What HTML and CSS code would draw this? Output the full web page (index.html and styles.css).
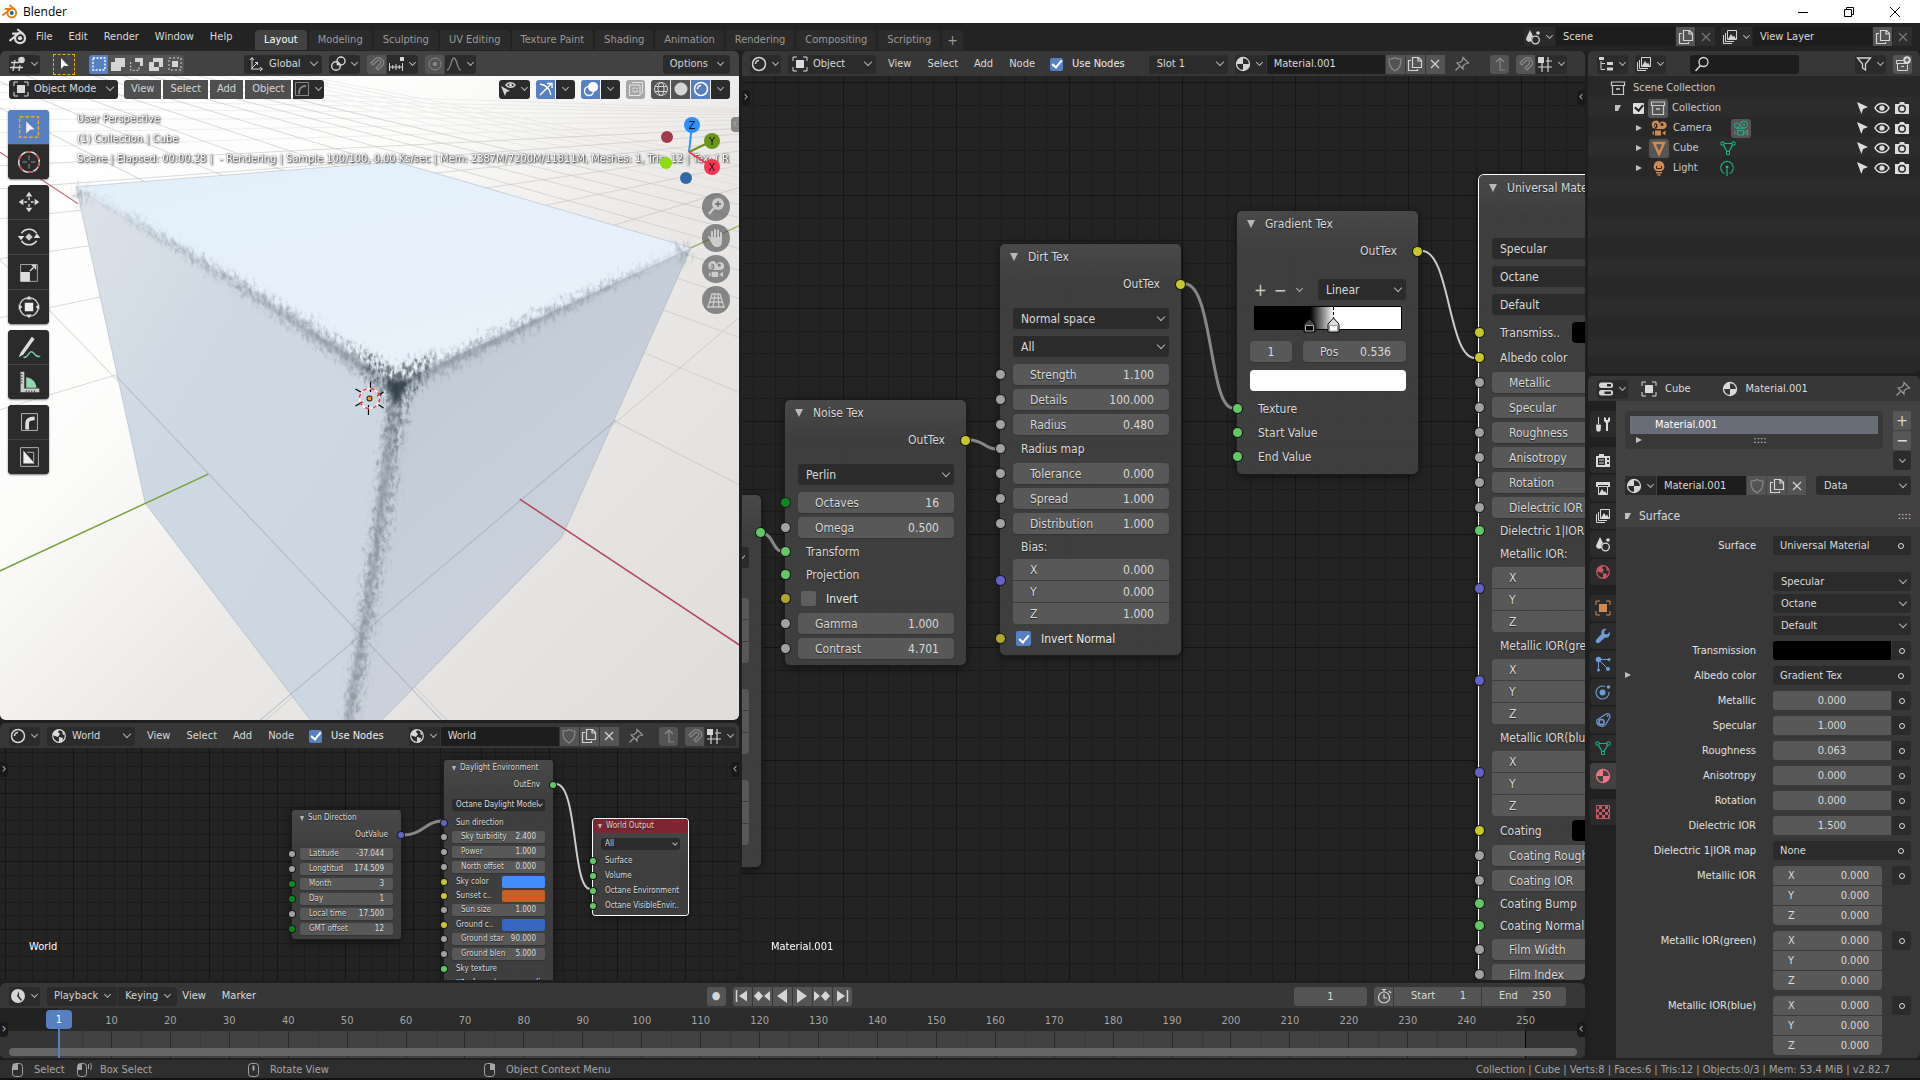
FILE: index.html
```html
<!DOCTYPE html>
<html lang="en">
<head>
    <meta charset="UTF-8">
    <meta name="viewport" content="width=device-width, initial-scale=1.0">
    <title>Blender</title>
    <link rel="stylesheet" href="styles.css">
</head>
<body>

<!-- icon set -->
<svg class="defs" aria-hidden="true">
    <symbol id="i-logo" viewBox="0 0 16 16"><path d="M1 11 8.500 5H3.500M8 1.500l4 3.200" fill="none" stroke="currentColor" stroke-width="1.800" stroke-linecap="round"/><circle cx="9.800" cy="9" r="4.400" fill="none" stroke="currentColor" stroke-width="2"/><circle cx="9.800" cy="9" r="1.900" fill="var(--core, currentColor)"/></symbol>
    <symbol id="i-view3d" viewBox="0 0 16 16"><path d="M1 6.500h8M0 11.500h13M5 4 3 15M10 9l-1 6" fill="none" stroke="currentColor" stroke-width="1.300"/><circle cx="11.500" cy="4" r="3.300" fill="currentColor"/></symbol>
    <symbol id="i-arrow" viewBox="0 0 16 16"><path d="M5 2v11l3-3.200 4.500.200z" fill="currentColor"/></symbol>
    <symbol id="i-arrow2" viewBox="0 0 16 16"><path d="M3 2l4.300 12 1.900-5L14 7z" fill="currentColor"/></symbol>
    <symbol id="i-selnew" viewBox="0 0 16 16"><path d="M2 2h12v12H2z" fill="none" stroke="currentColor" stroke-width="1.400" stroke-dasharray="2 1.500"/></symbol>
    <symbol id="i-selext" viewBox="0 0 16 16"><path d="M5 2h10v9h-4v4H1V6h4z" fill="currentColor"/></symbol>
    <symbol id="i-selsub" viewBox="0 0 16 16"><path d="M6 2h8v8h-3V6H6z" fill="currentColor"/><path d="M1.700 6v8.300H10V11" fill="none" stroke="currentColor" stroke-dasharray="2 1.500"/></symbol>
    <symbol id="i-seldif" viewBox="0 0 16 16"><path fill-rule="evenodd" d="M5 2h10v9h-4v4H1V6h4zm1 4v5h5V6z" fill="currentColor"/></symbol>
    <symbol id="i-selint" viewBox="0 0 16 16"><path d="M2 2h12v12H2z" fill="none" stroke="currentColor" stroke-dasharray="2 2"/><path d="M5 5h6v6H5z" fill="currentColor"/></symbol>
    <symbol id="i-axes" viewBox="0 0 16 16"><path d="M4 13V2M2 4l2-2.500L6 4M3 13h11M12 11l2.500 2-2.500 2M4 12l5-5M7 6.500h2.500V9" fill="none" stroke="currentColor"/></symbol>
    <symbol id="i-pivot" viewBox="0 0 16 16"><circle cx="6" cy="10" r="4.300" fill="none" stroke="currentColor" stroke-width="1.400"/><circle cx="11" cy="5" r="4" fill="none" stroke="currentColor" stroke-width="1.400"/><circle cx="8" cy="8" r="1.500" fill="currentColor"/></symbol>
    <symbol id="i-magnet" viewBox="0 0 16 16"><path d="M2 7 6 3c6-4 11 3 7 7l-4 4-2-2 4-4c2-3-1-5-3-3L4 9z" fill="none" stroke="currentColor" stroke-width="1.200"/></symbol>
    <symbol id="i-snapinc" viewBox="0 0 16 16"><path d="M1.500 7v8M14.500 7v8M1.500 11h13M4.700 9v4M8 8v6M11.300 9v4" fill="none" stroke="currentColor"/><path d="M12 1h4v4h-4z" fill="currentColor"/></symbol>
    <symbol id="i-snapgrid" viewBox="0 0 16 16"><path d="M5 7v9M11 1v15M1 11h14M9 5h6" fill="none" stroke="currentColor" stroke-width="1.200"/><path d="M1 1h6v6H1z" fill="currentColor"/></symbol>
    <symbol id="i-prop" viewBox="0 0 16 16"><circle cx="8" cy="8" r="6" fill="none" stroke="currentColor"/><circle cx="8" cy="8" r="2.200" fill="currentColor"/></symbol>
    <symbol id="i-falloff" viewBox="0 0 16 16"><path d="M1 14c4 0 4-12 7-12s3 12 7 12" fill="none" stroke="currentColor" stroke-width="1.300"/></symbol>
    <symbol id="i-object" viewBox="0 0 16 16"><path d="M1 5V1h4M11 1h4v4M15 11v4h-4M5 15H1v-4" fill="none" stroke="currentColor"/><path d="M4 4h8v8H4z" fill="currentColor"/></symbol>
    <symbol id="i-curvebox" viewBox="0 0 16 16"><path d="M1.500 1.500h13v13h-13z" fill="none" stroke="currentColor"/><path d="M5 13c0-6 2-8 7-8" fill="none" stroke="currentColor" stroke-width="2"/></symbol>
    <symbol id="i-visib" viewBox="0 0 16 16"><path d="M6 4c2-3 7-3 9 0-2 3-7 3-9 0z" fill="none" stroke="currentColor" stroke-width="1.500"/><circle cx="10.500" cy="4" r="1.500" fill="currentColor"/><path d="M1 5l4 10 1.500-4L10 10z" fill="currentColor"/></symbol>
    <symbol id="i-gizmo" viewBox="0 0 16 16"><path d="M2 3c6 1 10 5 11 11M2 14 13 3M9 2.500h5V7" fill="none" stroke="currentColor" stroke-width="1.400"/></symbol>
    <symbol id="i-overlay" viewBox="0 0 16 16"><circle cx="10" cy="6" r="5" fill="currentColor"/><circle cx="6" cy="10" r="4.500" fill="none" stroke="currentColor" stroke-width="1.400"/></symbol>
    <symbol id="i-xray" viewBox="0 0 16 16"><path d="M4 1.500h10.500V12H12M1.500 4H12v10.500H1.500z" fill="none" stroke="currentColor"/><path d="M5 7h4v4H5z" fill="none" stroke="currentColor" stroke-dasharray="2 1"/></symbol>
    <symbol id="i-wire" viewBox="0 0 16 16"><circle cx="8" cy="8" r="6.500" fill="none" stroke="currentColor"/><ellipse cx="8" cy="8" rx="3" ry="6.500" fill="none" stroke="currentColor"/><path d="M2 5.500h12M2 10.500h12" stroke="currentColor"/></symbol>
    <symbol id="i-solid" viewBox="0 0 16 16"><circle cx="8" cy="8" r="6.500" fill="currentColor"/></symbol>
    <symbol id="i-shader" viewBox="0 0 16 16"><circle cx="8" cy="8" r="6.500" fill="none" stroke="currentColor" stroke-width="1.500"/><path d="M4.500 8c0-2 1.500-3.500 3.500-3.500" fill="none" stroke="currentColor" stroke-width="1.600"/></symbol>
    <symbol id="i-material" viewBox="0 0 16 16"><circle cx="8" cy="8" r="6.500" fill="none" stroke="currentColor" stroke-width="1.300"/><path d="M8 1.500V8H1.500A6.500 6.500 0 0 1 8 1.500zM8 8h6.500A6.500 6.500 0 0 1 8 14.500z" fill="currentColor"/></symbol>
    <symbol id="i-world" viewBox="0 0 16 16"><circle cx="8" cy="8" r="6.300" fill="none" stroke="currentColor" stroke-width="1.200"/><path d="M2 5c2-3 5-3.500 6-3l-1 2 2 2-2 3-3-1-2.500-1zM8 9l4 1-1 4-3 .5z M11 3l3 3-2 1z" fill="currentColor"/></symbol>
    <symbol id="i-shield" viewBox="0 0 16 16"><path d="M8 1.500C6 3 4 3 2 3c0 6 1 9 6 12 5-3 6-6 6-12-2 0-4 0-6-1.500z" fill="none" stroke="currentColor" stroke-width="1.200"/></symbol>
    <symbol id="i-dup" viewBox="0 0 16 16"><path d="M5.500 1.500h6l3 3v7h-9z M11 1.500V5h3.500" fill="none" stroke="currentColor" stroke-width="1.200"/><path d="M4 4.500H1.500v10h9V13" fill="none" stroke="currentColor" stroke-width="1.200"/></symbol>
    <symbol id="i-x" viewBox="0 0 16 16"><path d="m4 4 8 8M12 4l-8 8" stroke="currentColor" stroke-width="1.200"/></symbol>
    <symbol id="i-pin" viewBox="0 0 16 16"><path d="m9 1.500 5.500 5.500-1.500.500-2 .500-2 2v3L3 7l3-.500 2.500-2zM5.500 10.500 1.500 14.500" fill="none" stroke="currentColor" stroke-width="1.200"/></symbol>
    <symbol id="i-up" viewBox="0 0 16 16"><path d="M8 14V2M4 6l4-4 4 4M8 14h5" fill="none" stroke="currentColor" stroke-width="1.200"/></symbol>
    <symbol id="i-scene" viewBox="0 0 16 16"><path d="M5 1 1.500 8.500C0 12 4 14 6.500 12c-1-2 0-4 1.500-5z" fill="currentColor"/><circle cx="10.500" cy="11" r="3.800" fill="none" stroke="currentColor" stroke-width="1.300"/><circle cx="13" cy="4" r="1.800" fill="currentColor"/></symbol>
    <symbol id="i-layers" viewBox="0 0 16 16"><path d="M5.500 1.500h9v9h-9zM3.500 4v8.500H12M1.500 6v8.500H10" fill="none" stroke="currentColor"/><path d="m6 10 3-5 2 3 1-1.500 2 3.500z" fill="currentColor"/></symbol>
    <symbol id="i-tree" viewBox="0 0 16 16"><path d="M1 1h5v3H1zM9 6h6v3H9zM9 11.500h6v3H9z" fill="currentColor"/><path d="M3 5v8.500h4M3 7.500h4" fill="none" stroke="currentColor"/></symbol>
    <symbol id="i-search" viewBox="0 0 16 16"><circle cx="9.500" cy="6" r="4.500" fill="none" stroke="currentColor" stroke-width="1.300"/><path d="M6.500 9.500 1.500 15" stroke="currentColor" stroke-width="1.500"/></symbol>
    <symbol id="i-filter" viewBox="0 0 16 16"><path d="M1.500 2h13L9.500 8v6l-3-2V8z" fill="none" stroke="currentColor" stroke-width="1.300"/></symbol>
    <symbol id="i-newcol" viewBox="0 0 16 16"><path d="M1.500 4.500H8M1.500 4.500v3h12M2.500 7.500v7h10v-6M6 10.500h3" fill="none" stroke="currentColor"/><circle cx="12" cy="4" r="3.800" fill="currentColor"/><path d="M12 2v4M10 4h4" stroke="#444"/></symbol>
    <symbol id="i-archive" viewBox="0 0 16 16"><path d="M1.500 2h13v3.500h-13zM2.500 5.500h11v9h-11z" fill="none" stroke="currentColor" stroke-width="1.200"/><path d="M6 9h4" stroke="currentColor" stroke-width="1.600"/></symbol>
    <symbol id="i-camera" viewBox="0 0 16 16"><path fill-rule="evenodd" d="M3.500 3a3 3 0 1 1 0 6h9a3.800 3.800 0 1 0-4-5.500A3 3 0 0 0 1 5.500 3 3 0 0 0 4 8.500zM4 4.500a1.200 1.200 0 1 1 0 2.400 1.200 1.200 0 0 1 0-2.400zM11 3a1.500 1.500 0 1 1 0 3 1.500 1.500 0 0 1 0-3z" fill="currentColor"/><path d="M4 10.500h6v5H4zM11 13l3.500-2.500v5zM3 11.500v3H1.500v-3z" fill="currentColor"/></symbol>
    <symbol id="i-camline" viewBox="0 0 16 16"><circle cx="4" cy="5.500" r="2.500" fill="none" stroke="currentColor"/><circle cx="11" cy="4.500" r="3.500" fill="none" stroke="currentColor"/><circle cx="11" cy="4.500" r="1" fill="currentColor"/><path d="M3 8.300h9M4.500 10.500h6v4.500h-6zM11 12.500l3.500-2v4.500zM2 11v3" fill="none" stroke="currentColor"/></symbol>
    <symbol id="i-cone" viewBox="0 0 16 16"><path d="M3 3h10L8 14z" fill="none" stroke="currentColor" stroke-width="2.500"/></symbol>
    <symbol id="i-mesh" viewBox="0 0 16 16"><path d="M2.500 3.500h11L8 13z" fill="none" stroke="currentColor" stroke-width="1.200"/><path d="M1 2h3v3H1zM12 2h3v3h-3zM6.500 11.500h3v3h-3z" fill="#282828" stroke="currentColor"/></symbol>
    <symbol id="i-bulb" viewBox="0 0 16 16"><path d="M8 1a5.500 5.500 0 0 0-3 10h6A5.500 5.500 0 0 0 8 1z" fill="currentColor"/><path d="M5.500 6v2.500h5V6" fill="none" stroke="#282828"/><path d="M5 12.700h6M6.500 15h3" stroke="currentColor" stroke-width="1.500"/></symbol>
    <symbol id="i-lightdata" viewBox="0 0 16 16"><path d="M5.500 13.500a6.300 6.300 0 1 1 5 0M8 9v7" fill="none" stroke="currentColor" stroke-width="1.200"/><circle cx="8" cy="7" r="1.500" fill="currentColor"/></symbol>
    <symbol id="i-eye" viewBox="0 0 16 16"><path d="M1 8c3-6 11-6 14 0-3 6-11 6-14 0z" fill="none" stroke="currentColor" stroke-width="1.600"/><circle cx="8" cy="8" r="2.600" fill="currentColor"/></symbol>
    <symbol id="i-photo" viewBox="0 0 16 16"><path fill-rule="evenodd" d="M1 4h4l1-2h4l1 2h4v10H1zm7 .8a4 4 0 1 0 0 8 4 4 0 0 0 0-8z" fill="currentColor"/><circle cx="8" cy="8.800" r="2.500" fill="currentColor"/></symbol>
    <symbol id="i-props" viewBox="0 0 16 16"><rect x="1" y="1.500" width="14" height="5.500" rx="2.500" fill="currentColor"/><rect x="1" y="9" width="14" height="5.500" rx="2.500" fill="currentColor"/><path d="M9 3h4v2.500H9zM6.500 10.500H13V13H6.500z" fill="#2b2b2b"/></symbol>
    <symbol id="i-tool" viewBox="0 0 16 16"><path d="M3.500 1v7M1.500 9h4l-.5 6h-3z" fill="currentColor" stroke="currentColor"/><path d="M9 1v4l2 2v8h2V7l2-2V1l-2 1v2h-2V2z" fill="currentColor"/></symbol>
    <symbol id="i-render" viewBox="0 0 16 16"><path fill-rule="evenodd" d="M4 2h5v2h6v11H1V4h3zM3 6v7h7V6zm9 0v2h2V6zm0 4v2h2v-2z" fill="currentColor"/><path d="M4 8h5M4 11h5" stroke="currentColor"/></symbol>
    <symbol id="i-output" viewBox="0 0 16 16"><path d="M1 2h14v5h-2V5H3v2H1z" fill="currentColor"/><path d="M3.500 6.500h9v8h-9z" fill="none" stroke="currentColor"/><path d="m4 14 3-5 2 3 1-1 2 3z" fill="currentColor"/></symbol>
    <symbol id="i-wrench" viewBox="0 0 16 16"><path d="M14.500 4 12 6.500 9.500 6 9 3.500 11.500 1C8 0 5.500 3 6.500 6L1 12c-1 2 1 4 3 3l6-5.500c3 1 6-2 4.500-5.500z" fill="currentColor"/></symbol>
    <symbol id="i-particles" viewBox="0 0 16 16"><circle cx="3.500" cy="3.500" r="2.800" fill="currentColor"/><path d="M3.500 3.500H14M3.500 3.500V14M3.500 3.500 13 13" stroke="currentColor"/><circle cx="14" cy="3.500" r="1.500" fill="currentColor"/><circle cx="3.500" cy="14" r="1.500" fill="currentColor"/><circle cx="13" cy="13" r="2" fill="currentColor"/></symbol>
    <symbol id="i-physics" viewBox="0 0 16 16"><circle cx="7.500" cy="8.500" r="3" fill="currentColor"/><path d="M10 2.500A6.500 6.500 0 1 0 14 8" fill="none" stroke="currentColor" stroke-width="1.200"/><circle cx="13.500" cy="3" r="1.800" fill="currentColor"/></symbol>
    <symbol id="i-constraint" viewBox="0 0 16 16"><path d="M2 8 11 2c3-1.500 5 1.500 3.500 4L11 12a5 5 0 0 1-9-4z" fill="none" stroke="currentColor" stroke-width="1.200"/><circle cx="6.500" cy="10" r="2.600" fill="none" stroke="currentColor" stroke-width="1.500"/><circle cx="12.700" cy="4" r="1" fill="currentColor"/></symbol>
    <symbol id="i-checker" viewBox="0 0 16 16"><path d="M1.500 1.500h13v13h-13z" fill="none" stroke="currentColor"/><path d="M4 2h3v3H4zM10 2h3v3h-3zM1 5h3v3H1zM7 5h3v3H7zM13 5h2v3h-2zM4 8h3v3H4zM10 8h3v3h-3zM1 11h3v3H1zM7 11h3v3H7zM13 11h2v3h-2z" fill="currentColor"/></symbol>
    <symbol id="i-clock" viewBox="0 0 16 16"><path fill-rule="evenodd" d="M8 1a7 7 0 1 1 0 14A7 7 0 0 1 8 1zm1 2L7 8l4 5 1-1-3-4z" fill="currentColor"/></symbol>
    <symbol id="i-watch" viewBox="0 0 16 16"><circle cx="8" cy="9.500" r="5.500" fill="none" stroke="currentColor" stroke-width="1.200"/><path d="M8 6v4h3M6 1.500h4M8 2v2M13 3l2 2" fill="none" stroke="currentColor" stroke-width="1.200"/></symbol>
    <symbol id="i-start" viewBox="0 0 16 16"><path d="M2.500 2v12" stroke="currentColor" stroke-width="1.500"/><path d="M13 2.500v11L5 8z" fill="currentColor"/></symbol>
    <symbol id="i-end" viewBox="0 0 16 16"><path d="M13.500 2v12" stroke="currentColor" stroke-width="1.500"/><path d="M3 2.500v11L11 8z" fill="currentColor"/></symbol>
    <symbol id="i-prevkey" viewBox="0 0 16 16"><path d="M0 8l4.500-5L9 8l-4.500 5zM16 3v10l-6-5z" fill="currentColor"/></symbol>
    <symbol id="i-nextkey" viewBox="0 0 16 16"><path d="M7 8l4.500-5L16 8l-4.500 5zM0 3v10l6-5z" fill="currentColor"/></symbol>
    <symbol id="i-back" viewBox="0 0 16 16"><path d="M13 1v14L3 8z" fill="currentColor"/></symbol>
    <symbol id="i-play" viewBox="0 0 16 16"><path d="M3 1v14l10-7z" fill="currentColor"/></symbol>
    <symbol id="i-lmb" viewBox="0 0 16 16"><rect x="2.500" y="1.500" width="10" height="13" rx="3" fill="none" stroke="currentColor"/><path d="M3 2h5v6H3z" fill="currentColor"/></symbol>
    <symbol id="i-mmb" viewBox="0 0 16 16"><rect x="2.500" y="1.500" width="10" height="13" rx="3" fill="none" stroke="currentColor"/><path d="M6.500 3.500h2v5h-2z" fill="currentColor"/></symbol>
    <symbol id="i-rmb" viewBox="0 0 16 16"><rect x="2.500" y="1.500" width="10" height="13" rx="3" fill="none" stroke="currentColor"/><path d="M8 2h5v6H8z" fill="currentColor"/></symbol>
    <symbol id="i-drag" viewBox="0 0 16 16"><rect x="1.500" y="1.500" width="9" height="13" rx="3" fill="none" stroke="currentColor"/><path d="M2 2h4v6H2z" fill="currentColor"/><path d="M12.500 2v5M14.500 1c1 2 1 5 0 7" fill="none" stroke="currentColor"/></symbol>
</svg>

<div class="titlebar">
    <svg class="ic app"><use href="#i-logo"/></svg><span>Blender</span>
    <div class="winbtns">
        <button aria-label="Minimize"><svg viewBox="0 0 12 12"><path d="M1 6.500h10" stroke="#000"/></svg></button>
        <button aria-label="Restore"><svg viewBox="0 0 12 12"><path d="M1.500 3.500h7v7h-7zM3.500 3V1.500h7v7H9" fill="none" stroke="#000"/></svg></button>
        <button aria-label="Close"><svg viewBox="0 0 12 12"><path d="m1 1 10 10M11 1 1 11" stroke="#000"/></svg></button>
    </div>
</div>

<header class="topbar">
    <svg class="ic logo"><use href="#i-logo"/></svg>
    <nav class="menus"><button>File</button><button>Edit</button><button>Render</button><button>Window</button><button>Help</button></nav>
    <nav class="tabs">
        <button class="on">Layout</button><button>Modeling</button><button>Sculpting</button><button>UV Editing</button><button>Texture Paint</button><button>Shading</button><button>Animation</button><button>Rendering</button><button>Compositing</button><button>Scripting</button><button class="addtab" aria-label="Add workspace">+</button>
    </nav>
    <div class="idblock push">
        <button class="btn wide" aria-label="Browse scene"><svg class="ic"><use href="#i-scene"/></svg><i class="chev"></i></button>
        <input class="name long" aria-label="Scene" value="Scene">
        <button class="btn lite" aria-label="New scene"><svg class="ic"><use href="#i-dup"/></svg></button>
        <button class="btn dim" aria-label="Delete scene"><svg class="ic"><use href="#i-x"/></svg></button>
    </div>
    <div class="idblock">
        <button class="btn wide" aria-label="Browse view layer"><svg class="ic"><use href="#i-layers"/></svg><i class="chev"></i></button>
        <input class="name long" aria-label="View Layer" value="View Layer">
        <button class="btn lite" aria-label="New view layer"><svg class="ic"><use href="#i-dup"/></svg></button>
        <button class="btn dim" aria-label="Delete view layer"><svg class="ic"><use href="#i-x"/></svg></button>
    </div>
</header>

<main class="workspace">

    <!-- 3D viewport -->
    <section class="area view3d">
        <div class="bar">
            <button class="btn wide" aria-label="Editor type"><svg class="ic"><use href="#i-view3d"/></svg><i class="chev"></i></button>
            <button class="tweak" aria-label="Tweak"><svg class="ic"><use href="#i-arrow"/></svg></button>
            <div class="group modes">
                <button class="btn blue" aria-label="Set"><svg class="ic"><use href="#i-selnew"/></svg></button><button class="btn lite" aria-label="Extend"><svg class="ic"><use href="#i-selext"/></svg></button><button class="btn lite" aria-label="Subtract"><svg class="ic"><use href="#i-selsub"/></svg></button><button class="btn lite" aria-label="Difference"><svg class="ic"><use href="#i-seldif"/></svg></button><button class="btn lite" aria-label="Intersect"><svg class="ic"><use href="#i-selint"/></svg></button>
            </div>
            <div class="pick icon orient"><svg class="ic"><use href="#i-axes"/></svg><select aria-label="Orientation"><option>Global</option></select></div>
            <button class="btn wide" aria-label="Pivot"><svg class="ic"><use href="#i-pivot"/></svg><i class="chev"></i></button>
            <div class="group">
                <button class="btn lite faint" aria-label="Snap"><svg class="ic"><use href="#i-magnet"/></svg></button><button class="btn wide" aria-label="Snap to"><svg class="ic"><use href="#i-snapinc"/></svg><i class="chev"></i></button>
            </div>
            <div class="group">
                <button class="btn lite faint" aria-label="Proportional editing"><svg class="ic"><use href="#i-prop"/></svg></button><button class="btn wide faint" aria-label="Falloff"><svg class="ic"><use href="#i-falloff"/></svg><i class="chev"></i></button>
            </div>
            <button class="btn text push">Options<i class="chev"></i></button>
        </div>
        <div class="viewport">
            <svg class="render" viewBox="1 76 738 644" preserveAspectRatio="xMidYMid slice" role="img" aria-label="Rendered cube">
                <defs>
                    <linearGradient id="bg" x1="0" y1="0.100" x2="1" y2="1"><stop offset="0" stop-color="#fff"/><stop offset=".3" stop-color="#fcfcfb"/><stop offset=".55" stop-color="#ebe9e7"/><stop offset="1" stop-color="#dedddc"/></linearGradient>
                    <linearGradient id="ftop" x1="0" y1="0" x2="0.600" y2="1"><stop offset="0" stop-color="#e2f0fb"/><stop offset="1" stop-color="#eaf1fa"/></linearGradient>
                    <linearGradient id="fleft" x1="0" y1="0" x2="0.700" y2="0.700"><stop offset="0" stop-color="#dde2e9"/><stop offset=".5" stop-color="#cfd9e3"/><stop offset="1" stop-color="#cdd7e2"/></linearGradient>
                    <linearGradient id="fright" x1="0" y1="0" x2="0.600" y2="1"><stop offset="0" stop-color="#bcc9d4"/><stop offset="1" stop-color="#cfd4de"/></linearGradient>
                    <!-- blurred edge strips broken up by a grainy mask -->
                    <filter id="dirt" filterUnits="userSpaceOnUse" x="40" y="150" width="680" height="580">
                        <feGaussianBlur in="SourceGraphic" stdDeviation="3" result="b"/>
                        <feTurbulence type="fractalNoise" baseFrequency=".26 .15" numOctaves="3" seed="4" result="n"/>
                        <feDisplacementMap in="b" in2="n" scale="20" xChannelSelector="R" yChannelSelector="G" result="d"/>
                        <feColorMatrix in="n" values="0 0 0 0 0 0 0 0 0 0 0 0 0 0 0 0 0 3 0 -1" result="m"/>
                        <feComposite in="d" in2="m" operator="in"/>
                        <feGaussianBlur stdDeviation=".6"/>
                    </filter>
                    <filter id="soft" filterUnits="userSpaceOnUse" x="40" y="150" width="680" height="580"><feGaussianBlur stdDeviation="2"/></filter>
                </defs>
                <path d="M0 70h740v655H0z" fill="url(#bg)"/>
                <g stroke="#c4c3c2" stroke-opacity=".6" fill="none">
                    <path d="M-290-40 740 1021M-290-40 740 485M-290-40 740 393M-290-40 740 338M-290-40 740 299M-290-40 740 271M-290-40 740 249M-290-40 740 232M-290-40 740 218M-290-40 740 205"/>
                    <path d="M975 117 0 946M975 117 0 410M975 117 0 318M975 117 0 259M975 117 0 219M975 117 0 189M975 117 0 166"/>
                    <path stroke-opacity=".25" d="M-290-40 740 195M-290-40 740 186M-290-40 740 178M-290-40 740 172M-290-40 740 166M-290-40 740 161M975 117 0 148M975 117 0 133M975 117 0 120M975 117 0 109M975 117 0 100M975 117 0 93M975 117 0 85"/>
                </g>
                <path d="M0 152 79 204" stroke="#c87080" stroke-width="1.300"/><path d="M691 248 739 226" stroke="#93b25c" stroke-width="1.300"/>
                <path d="M77 187 397 162 691 248 396 384z" fill="url(#ftop)"/>
                <path d="M77 187 396 384 347 722H313L146 503z" fill="url(#fleft)"/>
                <path d="M691 248 562 537 380 722H347L396 384z" fill="url(#fright)"/>
                <path filter="url(#soft)" fill="#8d98a3" opacity=".6" d="M77 186 250 289 390 378 406 378 560 308 691 247 560 312 402 390 378 560 352 722H345L372 560 390 392 250 294z"/>
                <g filter="url(#dirt)" fill="#848d95">
                    <path d="M76 184 250 284 396 370 410 370 560 301 691 245 560 315 404 396H388L250 298z" opacity=".55"/>
                    <path d="M350 346 396 368 438 352 410 402 398 450H391L386 402z" opacity=".8" fill="#59626a"/>
                    <path d="M389 390h16l-8 100-40 232H344l32-222z" opacity=".7" fill="#848b94"/>
                    <path d="M76 184l16 5-12 22zM692 246l-20-4 11 26z" opacity=".5"/>
                </g>
                <path filter="url(#soft)" d="M387 380h22l-8 18-5 8-4-8z" fill="#2b3740" opacity=".85"/>
                <path d="M77 187 397 162 691 248M691 248 562 537 380 722M77 187 146 503 313 722" fill="none" stroke="#9aa4ae" stroke-opacity=".4" stroke-width="1"/>
                <path d="M117 376 442 720M616 420 258 722" stroke="#9a9fa5" stroke-opacity=".55" fill="none"/>
                <path d="M0 571 209 474" stroke="#7ba13a" stroke-width="1.600"/><path d="M520 499 740 645" stroke="#b5485c" stroke-width="1.600"/>
                <path d="M371 382v10M369 405v10M356 389l7 4M384 392l-6 4M356 406l7-4M384 408l-6-4" stroke="#000" stroke-width="1.200"/>
                <circle cx="370" cy="398.500" r="10" fill="none" stroke="#fff" stroke-width="1.500"/><circle cx="370" cy="398.500" r="10" fill="none" stroke="#e33" stroke-width="1.500" stroke-dasharray="4 4"/><circle cx="370" cy="398.500" r="2.500" fill="#f90" stroke="#222"/>
            </svg>
            <div class="bar over">
                <div class="pick icon mode"><svg class="ic"><use href="#i-object"/></svg><select aria-label="Mode"><option>Object Mode</option></select></div>
                <div class="group vmenus">
                    <button class="btn flat">View</button><button class="btn flat">Select</button><button class="btn flat">Add</button><button class="btn flat">Object</button><button class="btn wide faint" aria-label="Curve"><svg class="ic"><use href="#i-curvebox"/></svg><i class="chev"></i></button>
                </div>
                <button class="btn wide push" aria-label="Visibility"><svg class="ic"><use href="#i-visib"/></svg><i class="chev"></i></button>
                <div class="group"><button class="btn blue" aria-label="Gizmos"><svg class="ic"><use href="#i-gizmo"/></svg></button><button class="btn" aria-label="Gizmo options"><i class="chev"></i></button></div>
                <div class="group"><button class="btn blue" aria-label="Overlays"><svg class="ic"><use href="#i-overlay"/></svg></button><button class="btn" aria-label="Overlay options"><i class="chev"></i></button></div>
                <button class="btn xray" aria-label="X-ray"><svg class="ic"><use href="#i-xray"/></svg></button>
                <div class="group shading"><button class="btn lite" aria-label="Wireframe"><svg class="ic"><use href="#i-wire"/></svg></button><button class="btn lite" aria-label="Solid"><svg class="ic"><use href="#i-solid"/></svg></button><button class="btn blue" aria-label="Rendered"><svg class="ic"><use href="#i-shader"/></svg></button><button class="btn" aria-label="Shading options"><i class="chev"></i></button></div>
            </div>
            <div class="stats"><p>User Perspective</p><p>(1) Collection | Cube</p><p>Scene | Elapsed: 00:00.28 | &nbsp;- Rendering | Sample 100/100, 0.00 Ks/sec | Mem: 2387M/7200M/11811M, Meshes: 1, Tris: 12 | Tex: ( R</p></div>
            <div class="toolbar">
                <div>
                    <button class="blue" aria-label="Select box"><svg viewBox="0 0 32 32"><path d="M6 5h20v22H6z" fill="none" stroke="#f5a623" stroke-width="1.600" stroke-dasharray="4 2"/><path d="M13 10v13l4-4 5-.500z" fill="#eee"/></svg></button>
                    <button aria-label="Cursor"><svg viewBox="0 0 32 32"><circle cx="16" cy="16" r="11" fill="none" stroke="#ddd" stroke-width="1.500"/><circle cx="16" cy="16" r="11" fill="none" stroke="#c44" stroke-width="1.500" stroke-dasharray="6 6"/><path d="M16 9v5M16 18v5M9 16h5M18 16h5" stroke="#999"/></svg></button>
                </div>
                <div>
                    <button aria-label="Move"><svg viewBox="0 0 32 32"><path d="m16 5 3.500 5h-7zM16 27l3.500-5h-7zM5 16l5-3.500v7zM27 16l-5-3.500v7z" fill="#ddd"/><path d="M16 11v3M16 18v3M11 16h3M18 16h3" stroke="#ddd" stroke-width="1.500"/></svg></button>
                    <button aria-label="Rotate"><svg viewBox="0 0 32 32"><path d="M8 12a9.500 9.500 0 0 1 16 0M24 20a9.500 9.500 0 0 1-16 0" fill="none" stroke="#ddd" stroke-width="1.600"/><path d="M4 15h7l-3.500 4.500zM21 17h7l-3.500-5z" fill="#ddd"/><path d="m16 12 4 4-4 4-4-4z" fill="#ccc"/></svg></button>
                    <button aria-label="Scale"><svg viewBox="0 0 32 32"><path d="M7 8h18v18H7z" fill="none" stroke="#aaa"/><path d="M7 16h10v10H7z" fill="#ddd"/><path d="m17 15 6-6M23 13V9h-4" stroke="#ddd" stroke-width="1.500" fill="none"/></svg></button>
                    <button aria-label="Transform"><svg viewBox="0 0 32 32"><circle cx="16" cy="16" r="10" fill="none" stroke="#ccc" stroke-width="1.500"/><path d="M11.500 11.500h9v9h-9z" fill="#eee"/><path d="m16 4 3 4h-6zM16 28l3-4h-6zM5 13v6l4-3zM27 13v6l-4-3z" fill="#ddd"/></svg></button>
                </div>
                <div>
                    <button aria-label="Annotate"><svg viewBox="0 0 32 32"><path d="M7 22 19 5l3 2.500L10 24l-5 3z" fill="#ddd"/><path d="M10 27c6 1 5-7 9-6s2 6 9 5" fill="none" stroke="#6fc59a" stroke-width="1.600"/></svg></button>
                    <button aria-label="Measure"><svg viewBox="0 0 32 32"><path d="M7 5h4v18h16v4H7z" fill="#ccc"/><path d="M13 11c7 1 10 5 11 11H13z" fill="#8ed8b0"/><path d="M7 8h2M7 11h2M7 14h2M7 17h2M13 27v-2M16 27v-2M19 27v-2M22 27v-2" stroke="#333"/></svg></button>
                </div>
                <div>
                    <button aria-label="Bevel"><svg viewBox="0 0 32 32"><path d="M8 7h17v18H8z" fill="none" stroke="#bbb"/><path d="M14 24v-7c0-4 3-5 8-5" fill="none" stroke="#ddd" stroke-width="4"/></svg></button>
                    <button aria-label="Shear"><svg viewBox="0 0 32 32"><path d="M7 6h19v20H7z" fill="none" stroke="#bbb"/><path d="M10 9v14h12z" fill="#eee"/><path d="M14 11h7v10" fill="none" stroke="#bbb"/></svg></button>
                </div>
            </div>
            <div class="nav3d">
                <svg class="axis" viewBox="650 110 80 80">
                    <path d="M689 152 692 125" stroke="#2c8ffb" stroke-width="2"/><path d="M689 152 712 141" stroke="#6b961c" stroke-width="2"/><path d="M689 152 712 167" stroke="#f63652" stroke-width="2"/>
                    <circle cx="692" cy="125" r="8" fill="#2c8ffb"/><circle cx="712" cy="141" r="8" fill="#6b961c"/><circle cx="712" cy="167" r="8" fill="#f63652"/>
                    <circle cx="667" cy="137" r="6" fill="#a33b4d"/><circle cx="666" cy="163" r="6" fill="#8cdd0b"/><circle cx="686" cy="178" r="6" fill="#3069a6"/>
                    <text x="692" y="129">Z</text><text x="712" y="145">Y</text><text x="712" y="171">X</text>
                </svg>
                <button aria-label="Zoom"><svg viewBox="0 0 28 28"><circle cx="16" cy="11" r="6" fill="#ccc"/><path d="m12 15-5 6" stroke="#ccc" stroke-width="2.500"/><path d="M16 8v6M13 11h6" stroke="#666" stroke-width="1.300"/></svg></button>
                <button aria-label="Pan"><svg viewBox="0 0 28 28"><path d="M10 16V8M13 14V6M16 14V6.500M19 15V9M7 13l4 6" stroke="#ccc" stroke-width="2" stroke-linecap="round"/><path d="M9 13h11v4c0 4-2 6-5 6s-5-2-6-6z" fill="#ccc"/></svg></button>
                <button aria-label="Camera view"><svg viewBox="-5 -5 26 26"><use href="#i-camera" width="16" height="16"/></svg></button>
                <button aria-label="Orthographic"><svg viewBox="0 0 28 28"><path d="M10 8h8l4 13H6zM9 12h10M8 16h13M13 8l-2 13M16 8l1 13" fill="none" stroke="#ccc" stroke-width="1.300"/></svg></button>
            </div>
            <div class="flap right light">‹</div>
        </div>
    </section>

    <!-- material nodes -->
    <section class="area shader">
        <div class="bar">
            <button class="btn wide" aria-label="Editor type"><svg class="ic"><use href="#i-shader"/></svg><i class="chev"></i></button>
            <div class="pick icon w88"><svg class="ic"><use href="#i-object"/></svg><select aria-label="Shader type"><option>Object</option></select></div>
            <nav class="menus"><button>View</button><button>Select</button><button>Add</button><button>Node</button></nav>
            <label class="check"><input type="checkbox" checked>Use Nodes</label>
            <div class="pick w79"><select aria-label="Slot"><option>Slot 1</option></select></div>
            <div class="idblock">
                <button class="btn wide" aria-label="Browse material"><svg class="ic"><use href="#i-material"/></svg><i class="chev"></i></button>
                <input class="name long" aria-label="Material" value="Material.001">
                <button class="btn lite faint" aria-label="Fake user"><svg class="ic"><use href="#i-shield"/></svg></button><button class="btn lite" aria-label="New material"><svg class="ic"><use href="#i-dup"/></svg></button><button class="btn lite" aria-label="Unlink"><svg class="ic"><use href="#i-x"/></svg></button>
            </div>
            <button class="plain" aria-label="Pin"><svg class="ic"><use href="#i-pin"/></svg></button>
            <button class="btn lite faint push" aria-label="Parent"><svg class="ic"><use href="#i-up"/></svg></button>
            <div class="group"><button class="btn lite faint" aria-label="Snap"><svg class="ic"><use href="#i-magnet"/></svg></button><button class="btn wide" aria-label="Snap type"><svg class="ic"><use href="#i-snapgrid"/></svg><i class="chev"></i></button></div>
        </div>
        <div class="canvas">
            <div class="node n-part">
                <p class="out green"></p>
                <div class="pick"><select aria-label="Transform type"><option></option></select></div>
                <div class="vec"><label class="num"><input aria-label="Part X"></label><label class="num"><input aria-label="Part Y"></label><label class="num"><input aria-label="Part Z"></label></div>
                <div class="vec"><label class="num"><input aria-label="Part X 2"></label><label class="num"><input aria-label="Part Y 2"></label><label class="num"><input aria-label="Part Z 2"></label></div>
                <div class="vec"><label class="num"><input aria-label="Part X 3"></label><label class="num"><input aria-label="Part Y 3"></label><label class="num"><input aria-label="Part Z 3"></label></div>
            </div>
            <div class="node n-noise">
                <h3>Noise Tex</h3><p class="out yellow">OutTex</p>
                <div class="pick"><select aria-label="Noise type"><option>Perlin</option></select></div>
                <label class="num sk int">Octaves<input value="16"></label>
                <label class="num sk">Omega<input value="0.500"></label>
                <p class="line sk green">Transform</p>
                <p class="line sk green">Projection</p>
                <label class="check sk mustard"><input type="checkbox">Invert</label>
                <label class="num sk">Gamma<input value="1.000"></label>
                <label class="num sk">Contrast<input value="4.701"></label>
            </div>
            <div class="node n-dirt">
                <h3>Dirt Tex</h3><p class="out yellow">OutTex</p>
                <div class="pick"><select aria-label="Space"><option>Normal space</option></select></div>
                <div class="pick"><select aria-label="Objects"><option>All</option></select></div>
                <label class="num sk">Strength<input value="1.100"></label>
                <label class="num sk">Details<input value="100.000"></label>
                <label class="num sk">Radius<input value="0.480"></label>
                <p class="line sk">Radius map</p>
                <label class="num sk">Tolerance<input value="0.000"></label>
                <label class="num sk">Spread<input value="1.000"></label>
                <label class="num sk">Distribution<input value="1.000"></label>
                <p class="caption">Bias:</p>
                <div class="vec sk violet"><label class="num">X<input value="0.000"></label><label class="num">Y<input value="0.000"></label><label class="num">Z<input value="1.000"></label></div>
                <label class="check sk mustard"><input type="checkbox" checked>Invert Normal</label>
            </div>
            <div class="node n-grad">
                <h3>Gradient Tex</h3><p class="out yellow">OutTex</p>
                <div class="rampbar"><button aria-label="Add stop">+</button><button aria-label="Remove stop">−</button><button aria-label="Tools"><i class="chev"></i></button><div class="pick"><select aria-label="Interpolation"><option>Linear</option></select></div></div>
                <svg class="ramp" viewBox="0 0 148 28" preserveAspectRatio="none">
                    <defs><linearGradient id="rampfill"><stop offset=".38"/><stop offset=".54" stop-color="#fff"/></linearGradient></defs>
                    <path d="M.5.500h147v23H.5z" fill="url(#rampfill)" stroke="#000"/><path d="M79.500 1v12" stroke="#000" stroke-dasharray="3 2"/>
                    <path d="M50 18l5.500-5 5.500 5v8H50z" fill="#444" stroke="#000"/><path d="M51.500 19.500h8v5.500h-8z" stroke="#aaa"/>
                    <path d="M74 18l5.500-6 5.500 6v8H74z" fill="#ddd" stroke="#000"/><path d="M75.500 19.500h8v5.500h-8z" fill="#fff" stroke="#999"/>
                </svg>
                <div class="pair"><label class="num idx"><input aria-label="Stop index" value="1"></label><label class="num">Pos<input value="0.536"></label></div>
                <button class="swatch white" aria-label="Stop color"></button>
                <p class="line sk green">Texture</p>
                <p class="line sk green">Start Value</p>
                <p class="line sk green">End Value</p>
            </div>
            <div class="node n-uni picked">
                <h3>Universal Material</h3><p class="out none"></p>
                <div class="pick"><select aria-label="BSDF"><option>Specular</option></select></div>
                <div class="pick"><select aria-label="BRDF model"><option>Octane</option></select></div>
                <div class="pick"><select aria-label="Transmission type"><option>Default</option></select></div>
                <p class="line col sk yellow">Transmiss..<button class="swatch black" aria-label="Transmission color"></button></p>
                <p class="line col sk yellow">Albedo color</p>
                <label class="num sk">Metallic<input></label>
                <label class="num sk">Specular<input></label>
                <label class="num sk">Roughness<input></label>
                <label class="num sk">Anisotropy<input></label>
                <label class="num sk">Rotation<input></label>
                <label class="num sk">Dielectric IOR<input></label>
                <p class="line sk green">Dielectric 1|IOR map</p>
                <p class="caption">Metallic IOR:</p>
                <div class="vec sk violet"><label class="num">X<input></label><label class="num">Y<input></label><label class="num">Z<input></label></div>
                <p class="caption">Metallic IOR(green):</p>
                <div class="vec sk violet"><label class="num">X<input></label><label class="num">Y<input></label><label class="num">Z<input></label></div>
                <p class="caption">Metallic IOR(blue):</p>
                <div class="vec sk violet"><label class="num">X<input></label><label class="num">Y<input></label><label class="num">Z<input></label></div>
                <p class="line col sk yellow">Coating<button class="swatch black" aria-label="Coating color"></button></p>
                <label class="num sk">Coating Roughness<input></label>
                <label class="num sk">Coating IOR<input></label>
                <p class="line sk green">Coating Bump</p>
                <p class="line sk green">Coating Normal</p>
                <label class="num sk">Film Width<input></label>
                <label class="num sk">Film Index<input></label>
            </div>
            <svg class="links">
                <path d="M22 458c8 0 10 17 17 17M228 364c12 0 16 9 26 9M443 208c28 0 24 124 48 124"/><path class="hot" d="M680 175c28 0 26 107 53 107"/>
            </svg>
            <div class="flap left">›</div><div class="flap right">‹</div>
            <span class="treename">Material.001</span>
        </div>
    </section>

    <!-- world nodes -->
    <section class="area world">
        <div class="bar">
            <button class="btn wide" aria-label="Editor type"><svg class="ic"><use href="#i-shader"/></svg><i class="chev"></i></button>
            <div class="pick icon w88"><svg class="ic"><use href="#i-world"/></svg><select aria-label="Shader type"><option>World</option></select></div>
            <nav class="menus"><button>View</button><button>Select</button><button>Add</button><button>Node</button></nav>
            <label class="check"><input type="checkbox" checked>Use Nodes</label>
            <div class="idblock">
                <button class="btn wide" aria-label="Browse world"><svg class="ic"><use href="#i-world"/></svg><i class="chev"></i></button>
                <input class="name long" aria-label="World" value="World">
                <button class="btn lite faint" aria-label="Fake user"><svg class="ic"><use href="#i-shield"/></svg></button><button class="btn lite" aria-label="New world"><svg class="ic"><use href="#i-dup"/></svg></button><button class="btn lite" aria-label="Unlink"><svg class="ic"><use href="#i-x"/></svg></button>
            </div>
            <button class="plain" aria-label="Pin"><svg class="ic"><use href="#i-pin"/></svg></button>
            <button class="btn lite faint push" aria-label="Parent"><svg class="ic"><use href="#i-up"/></svg></button>
            <div class="group"><button class="btn lite faint" aria-label="Snap"><svg class="ic"><use href="#i-magnet"/></svg></button><button class="btn wide" aria-label="Snap type"><svg class="ic"><use href="#i-snapgrid"/></svg><i class="chev"></i></button></div>
        </div>
        <div class="canvas small">
            <div class="node n-sun">
                <h3>Sun Direction</h3><p class="out violet">OutValue</p>
                <label class="num sk">Latitude<input value="-37.044"></label>
                <label class="num sk">Longtitud<input value="174.509"></label>
                <label class="num sk int">Month<input value="3"></label>
                <label class="num sk int">Day<input value="1"></label>
                <label class="num sk">Local time<input value="17.500"></label>
                <label class="num sk int">GMT offset<input value="12"></label>
            </div>
            <div class="node n-day">
                <h3>Daylight Environment</h3><p class="out green">OutEnv</p>
                <div class="pick"><select aria-label="Daylight model"><option>Octane Daylight Model</option></select></div>
                <p class="line sk violet">Sun direction</p>
                <label class="num sk">Sky turbidity<input value="2.400"></label>
                <label class="num sk">Power<input value="1.000"></label>
                <label class="num sk">North offset<input value="0.000"></label>
                <p class="line sk yellow">Sky color<button class="swatch sky" aria-label="Sky color"></button></p>
                <p class="line sk yellow">Sunset c..<button class="swatch sunset" aria-label="Sunset color"></button></p>
                <label class="num sk">Sun size<input value="1.000"></label>
                <p class="line sk yellow">Ground c..<button class="swatch ground" aria-label="Ground color"></button></p>
                <label class="num sk">Ground star<input value="90.000"></label>
                <label class="num sk">Ground blen<input value="5.000"></label>
                <p class="line sk green">Sky texture</p>
                <label class="check"><input type="checkbox" checked>Importance sampling</label>
            </div>
            <div class="node n-out picked">
                <h3>World Output</h3>
                <div class="pick"><select aria-label="Target"><option>All</option></select></div>
                <p class="line sk green">Surface</p>
                <p class="line sk green">Volume</p>
                <p class="line sk green">Octane Environment</p>
                <p class="line sk green">Octane VisibleEnvir..</p>
            </div>
            <svg class="links"><path d="M404 87c18 0 22-14 38-14"/><path class="hot" d="M556 36c22 0 16 105 34 105"/></svg>
            <div class="flap left">›</div><div class="flap right">‹</div>
            <span class="treename">World</span>
        </div>
    </section>

    <!-- timeline -->
    <section class="area timeline">
        <div class="bar">
            <button class="btn wide" aria-label="Editor type"><svg class="ic"><use href="#i-clock"/></svg><i class="chev"></i></button>
            <div class="group"><button class="btn text">Playback<i class="chev"></i></button><button class="btn text">Keying<i class="chev"></i></button></div>
            <nav class="menus"><button>View</button><button>Marker</button></nav>
            <button class="btn lite rec push" aria-label="Auto keying">●</button>
            <div class="group transport">
                <button class="btn lite" aria-label="Jump to start"><svg class="ic"><use href="#i-start"/></svg></button><button class="btn lite" aria-label="Previous keyframe"><svg class="ic"><use href="#i-prevkey"/></svg></button><button class="btn lite" aria-label="Play reverse"><svg class="ic"><use href="#i-back"/></svg></button><button class="btn lite" aria-label="Play"><svg class="ic"><use href="#i-play"/></svg></button><button class="btn lite" aria-label="Next keyframe"><svg class="ic"><use href="#i-nextkey"/></svg></button><button class="btn lite" aria-label="Jump to end"><svg class="ic"><use href="#i-end"/></svg></button>
            </div>
            <input class="frame push" aria-label="Current frame" value="1">
            <div class="group range">
                <button class="btn lite" aria-label="Use preview range"><svg class="ic"><use href="#i-watch"/></svg></button>
                <label class="num">Start<input value="1"></label><label class="num">End<input value="250"></label>
            </div>
        </div>
        <div class="track">
            <ol class="ticks"><li>10</li><li>20</li><li>30</li><li>40</li><li>50</li><li>60</li><li>70</li><li>80</li><li>90</li><li>100</li><li>110</li><li>120</li><li>130</li><li>140</li><li>150</li><li>160</li><li>170</li><li>180</li><li>190</li><li>200</li><li>210</li><li>220</li><li>230</li><li>240</li><li>250</li></ol>
            <div class="scroll"></div>
            <div class="playhead">1</div>
            <div class="flap left">›</div><div class="flap right">‹</div>
        </div>
    </section>

    <aside class="side">
        <section class="area outliner">
            <div class="bar">
                <button class="btn wide" aria-label="Editor type"><svg class="ic"><use href="#i-tree"/></svg><i class="chev"></i></button>
                <button class="btn wide" aria-label="Display mode"><svg class="ic"><use href="#i-layers"/></svg><i class="chev"></i></button>
                <label class="search"><svg class="ic"><use href="#i-search"/></svg><input type="search" aria-label="Filter"></label>
                <button class="btn wide push" aria-label="Filter"><svg class="ic"><use href="#i-filter"/></svg><i class="chev"></i></button>
                <button class="btn lite" aria-label="New collection"><svg class="ic"><use href="#i-newcol"/></svg></button>
            </div>
            <ul class="rows">
                <li class="root"><svg class="ic"><use href="#i-archive"/></svg><span>Scene Collection</span></li>
                <li><i class="tri down"></i><input type="checkbox" class="tick" checked aria-label="Collection visible"><b class="chip"><svg class="ic"><use href="#i-archive"/></svg></b><span>Collection</span><span class="flags"><svg class="ic"><use href="#i-arrow2"/></svg><svg class="ic"><use href="#i-eye"/></svg><svg class="ic"><use href="#i-photo"/></svg></span></li>
                <li class="child"><i class="tri"></i><b class="orange"><svg class="ic"><use href="#i-camera"/></svg></b><span>Camera</span><b class="chip teal gap"><svg class="ic"><use href="#i-camline"/></svg></b><span class="flags"><svg class="ic"><use href="#i-arrow2"/></svg><svg class="ic"><use href="#i-eye"/></svg><svg class="ic"><use href="#i-photo"/></svg></span></li>
                <li class="child"><i class="tri"></i><b class="chip orange"><svg class="ic"><use href="#i-cone"/></svg></b><span>Cube</span><b class="teal gap"><svg class="ic"><use href="#i-mesh"/></svg></b><span class="flags"><svg class="ic"><use href="#i-arrow2"/></svg><svg class="ic"><use href="#i-eye"/></svg><svg class="ic"><use href="#i-photo"/></svg></span></li>
                <li class="child"><i class="tri"></i><b class="orange"><svg class="ic"><use href="#i-bulb"/></svg></b><span>Light</span><b class="teal gap"><svg class="ic"><use href="#i-lightdata"/></svg></b><span class="flags"><svg class="ic"><use href="#i-arrow2"/></svg><svg class="ic"><use href="#i-eye"/></svg><svg class="ic"><use href="#i-photo"/></svg></span></li>
            </ul>
        </section>

        <section class="area props">
            <div class="bar">
                <button class="btn wide" aria-label="Editor type"><svg class="ic"><use href="#i-props"/></svg><i class="chev"></i></button>
                <span class="crumb"><svg class="ic"><use href="#i-object"/></svg>Cube</span>
                <span class="crumb"><svg class="ic"><use href="#i-material"/></svg>Material.001</span>
                <button class="plain push" aria-label="Pin"><svg class="ic"><use href="#i-pin"/></svg></button>
            </div>
            <div class="propbody">
                <nav class="ptabs">
                    <button class="end" aria-label="Tool"><svg class="ic"><use href="#i-tool"/></svg></button>
                    <button aria-label="Render"><svg class="ic"><use href="#i-render"/></svg></button>
                    <button aria-label="Output"><svg class="ic"><use href="#i-output"/></svg></button>
                    <button aria-label="View layer"><svg class="ic"><use href="#i-layers"/></svg></button>
                    <button aria-label="Scene"><svg class="ic"><use href="#i-scene"/></svg></button>
                    <button class="end red" aria-label="World"><svg class="ic"><use href="#i-world"/></svg></button>
                    <button class="orange" aria-label="Object"><svg class="ic"><use href="#i-object"/></svg></button>
                    <button class="azure" aria-label="Modifiers"><svg class="ic"><use href="#i-wrench"/></svg></button>
                    <button class="azure" aria-label="Particles"><svg class="ic"><use href="#i-particles"/></svg></button>
                    <button class="azure" aria-label="Physics"><svg class="ic"><use href="#i-physics"/></svg></button>
                    <button class="azure" aria-label="Constraints"><svg class="ic"><use href="#i-constraint"/></svg></button>
                    <button class="teal" aria-label="Mesh data"><svg class="ic"><use href="#i-mesh"/></svg></button>
                    <button class="end pink on" aria-label="Material"><svg class="ic"><use href="#i-material"/></svg></button>
                    <button class="red" aria-label="Texture"><svg class="ic"><use href="#i-checker"/></svg></button>
                </nav>
                <div class="pcontent">
                    <div class="phead">
                        <div class="slots">
                            <div class="slotlist"><div class="slot">Material.001</div><div class="grip"><i class="tri"></i><span>::::</span></div></div>
                            <div class="slotbtns"><button aria-label="Add slot">+</button><button aria-label="Remove slot">−</button><button class="dark" aria-label="Slot menu"><i class="chev"></i></button></div>
                        </div>
                        <div class="matrow">
                            <div class="idblock">
                                <button class="btn wide" aria-label="Browse material"><svg class="ic"><use href="#i-material"/></svg><i class="chev"></i></button>
                                <input class="name" aria-label="Material name" value="Material.001">
                                <button class="btn lite faint" aria-label="Fake user"><svg class="ic"><use href="#i-shield"/></svg></button><button class="btn lite" aria-label="New material"><svg class="ic"><use href="#i-dup"/></svg></button><button class="btn lite" aria-label="Unlink"><svg class="ic"><use href="#i-x"/></svg></button>
                            </div>
                            <div class="pick"><select aria-label="Link"><option>Data</option></select></div>
                        </div>
                        <h2><i class="tri down"></i>Surface<span>::::</span></h2>
                    </div>
                    <div class="form">
                        <div class="prop first"><label for="p-surf">Surface</label><button class="field" id="p-surf">Universal Material<i class="dot"></i></button></div>
                        <div class="prop tight"><span></span><div class="pick"><select aria-label="BSDF"><option>Specular</option></select></div></div>
                        <div class="prop tight"><span></span><div class="pick"><select aria-label="BRDF"><option>Octane</option></select></div></div>
                        <div class="prop"><span></span><div class="pick"><select aria-label="Transmission type"><option>Default</option></select></div></div>
                        <div class="prop"><label for="p-tr">Transmission</label><div class="split"><button id="p-tr" class="black" aria-label="Transmission color"></button><button class="sock" aria-label="Link transmission"><i class="dot"></i></button></div></div>
                        <div class="prop"><label for="p-al"><i class="tri"></i>Albedo color</label><button class="field" id="p-al">Gradient Tex<i class="dot"></i></button></div>
                        <div class="prop"><label for="p-me">Metallic</label><div class="split"><input id="p-me" value="0.000"><button class="sock" aria-label="Link metallic"><i class="dot"></i></button></div></div>
                        <div class="prop"><label for="p-sp">Specular</label><div class="split"><input id="p-sp" value="1.000"><button class="sock" aria-label="Link specular"><i class="dot"></i></button></div></div>
                        <div class="prop"><label for="p-ro">Roughness</label><div class="split"><input id="p-ro" value="0.063"><button class="sock" aria-label="Link roughness"><i class="dot"></i></button></div></div>
                        <div class="prop"><label for="p-an">Anisotropy</label><div class="split"><input id="p-an" value="0.000"><button class="sock" aria-label="Link anisotropy"><i class="dot"></i></button></div></div>
                        <div class="prop"><label for="p-rt">Rotation</label><div class="split"><input id="p-rt" value="0.000"><button class="sock" aria-label="Link rotation"><i class="dot"></i></button></div></div>
                        <div class="prop"><label for="p-di">Dielectric IOR</label><div class="split"><input id="p-di" value="1.500"><button class="sock" aria-label="Link dielectric"><i class="dot"></i></button></div></div>
                        <div class="prop"><label for="p-dm">Dielectric 1|IOR map</label><button class="field" id="p-dm">None<i class="dot"></i></button></div>
                        <div class="prop"><label for="p-m1">Metallic IOR</label><div class="split gap10"><div class="vec"><label class="num">X<input id="p-m1" value="0.000"></label><label class="num">Y<input value="0.000"></label><label class="num">Z<input value="0.000"></label></div><button class="sock" aria-label="Link IOR"><i class="dot"></i></button></div></div>
                        <div class="prop"><label for="p-m2">Metallic IOR(green)</label><div class="split gap10"><div class="vec"><label class="num">X<input id="p-m2" value="0.000"></label><label class="num">Y<input value="0.000"></label><label class="num">Z<input value="0.000"></label></div><button class="sock" aria-label="Link IOR green"><i class="dot"></i></button></div></div>
                        <div class="prop"><label for="p-m3">Metallic IOR(blue)</label><div class="split gap10"><div class="vec"><label class="num">X<input id="p-m3" value="0.000"></label><label class="num">Y<input value="0.000"></label><label class="num">Z<input value="0.000"></label></div><button class="sock" aria-label="Link IOR blue"><i class="dot"></i></button></div></div>
                    </div>
                </div>
            </div>
        </section>
    </aside>
</main>

<footer class="status">
    <span class="hint h1"><svg class="ic"><use href="#i-lmb"/></svg>Select</span>
    <span class="hint h2"><svg class="ic"><use href="#i-drag"/></svg>Box Select</span>
    <span class="hint h3"><svg class="ic"><use href="#i-mmb"/></svg>Rotate View</span>
    <span class="hint"><svg class="ic"><use href="#i-rmb"/></svg>Object Context Menu</span>
    <span class="info">Collection | Cube | Verts:8 | Faces:6 | Tris:12 | Objects:0/3 | Mem: 53.4 MiB | v2.82.7</span>
</footer>

</body>
</html>
```
FILE: styles.css
```css
* { box-sizing: border-box; margin: 0; padding: 0; }
body { height: 100vh; display: flex; flex-direction: column; overflow: hidden; background: #1f1f1f; color: #dadada; font: 11px/14px "DejaVu Sans Condensed", "DejaVu Sans", sans-serif; }
button, input, select { font: inherit; color: inherit; border: 0; background: none; outline: 0; min-width: 0; }
input[type=search] { appearance: none; }
ul, ol { list-style: none; }
h2, h3 { font: inherit; }
.defs { position: absolute; width: 0; height: 0; }
.ic { width: 16px; height: 16px; flex: none; display: block; }
.push { margin-left: auto; }
.orange { color: #d18a50; } .teal { color: #1cb28a; } .red { color: #c75764; } .azure { color: #6f9bd8; } .pink { color: #ef7482; }

/* window title */
.titlebar { height: 23px; flex: none; background: #fff; color: #000; display: flex; align-items: center; gap: 5px; padding: 0 2px; font: 12px "Open Sans", sans-serif; }
.app { color: #e87d0d; --core: #265787; }
.winbtns { margin-left: auto; display: flex; }
.winbtns button { width: 46px; height: 20px; display: grid; place-items: center; }
.winbtns svg { width: 12px; height: 12px; }

/* top bar */
.topbar { height: 28px; flex: none; background: #232323; display: flex; align-items: center; padding: 0 8px 1px 9px; gap: 6px; }
.logo { width: 18px; height: 18px; }
.menus { display: flex; flex: none; }
.menus button { padding: 0 8px; }
.topbar .menus { width: 221px; margin-left: -5px; }
.tabs { display: flex; gap: 2px; align-self: flex-end; flex: none; }
.tabs button { height: 20px; padding: 0 9px; background: #2b2b2b; color: #9a9a9a; border-radius: 4px 4px 0 0; }
.tabs .on { background: #424242; color: #fff; }
.tabs .addtab { padding: 0 5px; font-size: 14px; }

/* header widgets */
.bar { height: 25px; flex: none; background: #373737; display: flex; align-items: center; gap: 7px; padding: 1px 9px 0 9px; border-radius: 5px 5px 0 0; white-space: nowrap; }
.btn { height: 19px; min-width: 19px; display: flex; align-items: center; justify-content: center; background: #2b2b2b; border-radius: 3px; flex: none; color: #d5d5d5; }
.wide { width: 31px; gap: 3px; }
.text { padding: 0 4px 0 7px; gap: 7px; }
.lite { background: #545454; }
.blue { background: #5680c2; color: #fff; }
.faint { color: #888; }
.dim { background: #2e2e2e; color: #777; }
.flat { background: #4f4f4f; padding: 0 7px; }
.xray { background: #a6a6a6; color: #e5e5e5; }
.plain { color: #999; }
.chev { display: block; width: 5px; height: 5px; border: solid #b4b4b4; border-width: 0 1px 1px 0; transform: rotate(45deg); margin: -3px 3px 0; flex: none; }
.group { display: flex; flex: none; gap: 1px; }
.group > * { border-radius: 0; }
.group > :first-child { border-radius: 3px 0 0 3px; }
.group > :last-child { border-radius: 0 3px 3px 0; }
.pick { position: relative; height: 19px; background: #2b2b2b; border-radius: 3px; flex: none; }
.pick select { appearance: none; width: 100%; height: 100%; padding: 0 16px 0 8px; }
.pick.icon select { padding-left: 25px; }
.pick .ic { position: absolute; left: 4px; top: 1px; }
.pick::after { content: ""; position: absolute; right: 5px; top: 50%; width: 5px; height: 5px; margin-top: -5px; border: solid #b4b4b4; border-width: 0 1px 1px 0; transform: rotate(45deg); pointer-events: none; }
.w88 { width: 88px; } .w79 { width: 79px; }
.idblock { display: flex; height: 19px; gap: 1px; flex: none; }
.idblock > * { border-radius: 0; }
.name { width: 89px; background: #1d1d1d; padding: 0 7px; }
.topbar .name { width: 119px; }
.check { display: flex; align-items: center; gap: 9px; color: #eee; }
.check input { appearance: none; width: 13px; height: 13px; border-radius: 2px; background: #5f5f5f; display: grid; place-items: center; flex: none; }
.check input:checked { background: #5680c2; }
.check input:checked::after { content: ""; width: 4px; height: 8px; border: solid #fff; border-width: 0 2px 2px 0; transform: rotate(40deg); margin-top: -2px; }

/* workspace */
.workspace { flex: 1; min-height: 0; display: grid; grid-template-columns: 739fr 843fr 332fr; grid-template-rows: 669fr 257fr 75px; gap: 3px; }
.area { display: flex; flex-direction: column; min-width: 0; min-height: 0; overflow: hidden; border-radius: 5px; }
.shader { grid-column: 2; grid-row: 1 / 3; }
.world { grid-column: 1; grid-row: 2; }
.timeline { grid-column: 1 / 3; grid-row: 3; }
.side { grid-column: 3; grid-row: 1 / 4; display: flex; flex-direction: column; gap: 3px; min-height: 0; }

/* viewport */
.view3d .bar { background: #424242; }
.viewport { position: relative; flex: 1; min-height: 0; overflow: hidden; border-radius: 0 0 5px 5px; }
.render { position: absolute; inset: 0; width: 100%; height: 100%; }
.tweak { width: 22px; height: 21px; margin: 0 7px 0 6px; border: 1px dashed #f5a623; display: grid; place-items: center; color: #fff; }
.modes { gap: 0; margin-right: 53px; }
.orient { width: 78px; }
.view3d .over { position: relative; background: none; height: 25px; gap: 6px; }
.mode { width: 109px; }
.vmenus { gap: 2px; }
.stats { position: absolute; left: 77px; top: 33px; color: #fff; text-shadow: 1px 1px 2px #222, 0 0 2px #444; line-height: 20px; white-space: nowrap; }
.toolbar { position: absolute; left: 8px; top: 34px; display: flex; flex-direction: column; gap: 6px; }
.toolbar div { display: flex; flex-direction: column; gap: 1px; border-radius: 4px; overflow: hidden; background: #444; box-shadow: 0 1px 2px rgba(0,0,0,.5); }
.toolbar button { width: 41px; height: 34px; background: #2b2b2b; display: grid; place-items: center; }
.toolbar .blue { background: #5680c2; }
.toolbar svg { width: 30px; height: 30px; }
.nav3d { position: absolute; right: 9px; top: 34px; display: flex; flex-direction: column; align-items: flex-end; gap: 3px; }
.axis { width: 80px; height: 80px; }
.axis text { font-size: 11px; text-anchor: middle; fill: #111; }
.nav3d button { width: 28px; height: 28px; border-radius: 50%; background: rgba(70,70,70,.6); color: #ccc; }
.nav3d button svg { width: 28px; height: 28px; }
.flap { position: absolute; top: 14px; width: 8px; height: 15px; background: #191919; color: #aaa; font-size: 14px; line-height: 12px; text-align: center; }
.flap.left { left: 0; border-radius: 0 4px 4px 0; }
.flap.right { right: 0; border-radius: 4px 0 0 4px; }
.flap.light { top: 41px; background: rgba(70,70,70,.6); }

/* node editors */
.shader .bar .menus, .world .bar .menus { margin: 0 0 0 -3px; }
.shader .w79 { margin-left: 17px; }
.shader .name { width: 118px; }
.shader .plain, .world .plain { margin-left: 2px; }
.shader .bar { padding: 1px 18px 0 8px; }
.world .bar { padding-right: 3px; }
.world .idblock { margin-left: 18px; }
.world .name { width: 118px; }
.canvas { position: relative; flex: 1; min-height: 0; overflow: hidden; background-color: #232323; font-size: 12px;
    background-image: linear-gradient(90deg, #141414 1px, transparent 1px), linear-gradient(#141414 1px, transparent 1px),
        linear-gradient(90deg, transparent 23px, #1b1b1b 23px 24px, transparent 24px 45px, #1b1b1b 45px 46px, transparent 46px 68px, #1b1b1b 68px 69px, transparent 69px 90px, #1b1b1b 90px 91px, transparent 91px),
        linear-gradient(transparent 23px, #1b1b1b 23px 24px, transparent 24px 45px, #1b1b1b 45px 46px, transparent 46px 68px, #1b1b1b 68px 69px, transparent 69px 90px, #1b1b1b 90px 91px, transparent 91px);
    background-size: 113px 113px; background-position: 101px 6px; }
.node { position: absolute; width: 181px; padding: 0 12px 6px 13px; display: flex; flex-direction: column; gap: 4px; background: linear-gradient(#4b4b4bf0, #404040f0 40px); border-radius: 5px; box-shadow: 0 0 0 1px #1c1c1c, 0 2px 8px rgba(0,0,0,.6); text-shadow: 0 1px 1px #222; white-space: nowrap; }
.node h3 { height: 26px; line-height: 25px; margin-left: -8px; display: flex; align-items: center; gap: 10px; padding-left: 5px; }
.node h3::before { content: ""; border: solid transparent; border-width: 8px 4px 0; border-top-color: #b8b8b8; }
.out { position: relative; height: 21px; line-height: 21px; text-align: right; padding-right: 9px; margin-bottom: 9px; }
.node .pick { height: 21px; margin-bottom: 3px; }
.num { height: 21px; background: #585858; border-radius: 4px; display: flex; align-items: center; padding: 0 15px 0 17px; box-shadow: 0 1px 1px #333; }
.num input { flex: 1; width: 0; text-align: right; }
.line { height: 20px; line-height: 20px; padding-left: 8px; display: flex; justify-content: space-between; align-items: center; }
.line.col { height: 21px; }
.caption { height: 17px; line-height: 18px; padding-left: 8px; }
.node .check { height: 21px; padding-left: 3px; gap: 10px; }
.node .check input { width: 15px; height: 15px; }
.vec { display: flex; flex-direction: column; gap: 1px; border-radius: 4px; }
.vec .num { border-radius: 0; box-shadow: none; }
.vec .num:first-child { border-radius: 4px 4px 0 0; }
.vec .num:last-child { border-radius: 0 0 4px 4px; }
.sk { position: relative; --dot: #a1a1a1; }
.sk::before, .out::after { content: ""; position: absolute; left: -17px; top: 50%; width: 9px; height: 9px; margin-top: -5px; border-radius: 50%; background: var(--dot); box-shadow: 0 0 0 1px #1a1a1a; z-index: 2; }
.vec.sk::before { top: 22px; }
.out::after { left: auto; right: -16px; }
.out.none::after { display: none; }
.sk.yellow, .out.yellow { --dot: #c7c729; }
.sk.green, .out.green { --dot: #63c763; }
.sk.violet, .out.violet { --dot: #6363c7; }
.sk.mustard { --dot: #b2a52e; }
.sk.int { --dot: #0f851f; }
.picked { box-shadow: 0 0 0 1px #fff, 0 2px 8px rgba(0,0,0,.6); }
.n-part { left: -162px; top: 419px; height: 372px; padding-top: 29px; }
.n-part .out { margin-bottom: 10px; }
.n-part { padding-top: 38px; }
.n-part .vec { margin-bottom: 22px; }
.n-part .pick { margin-bottom: 26px; }
.n-noise { left: 43px; top: 324px; }
.n-noise .line { height: 19px; }
.n-dirt { left: 258px; top: 168px; }
.n-grad { left: 495px; top: 135px; padding-bottom: 7px; }
.n-grad .line { height: 20px; }
.n-uni { left: 737px; top: 99px; }
.n-uni .out { margin-bottom: 8px; }
.n-uni .caption { height: 19px; line-height: 21px; }
.n-uni .line.green { height: 18px; }
.rampbar { display: flex; align-items: center; height: 21px; gap: 7px; margin: 4px 0 2px; padding-left: 4px; }
.rampbar button { width: 13px; font-size: 17px; color: #ccc; }
.rampbar .pick { width: 88px; margin: 0 0 0 auto; }
.ramp { width: 148px; height: 28px; margin: 0 4px 3px; }
.pair { display: flex; gap: 11px; margin-bottom: 4px; }
.pair .num { flex: 1; }
.pair .idx { flex: none; width: 42px; padding: 0 13px; }
.idx input { text-align: center; }
.swatch { height: 21px; width: 76px; border-radius: 4px; }
.swatch.white { width: 100%; background: #fff; margin-bottom: 4px; }
.black { background: #000; }
.swatch.sky { background: #428eff; } .swatch.sunset { background: #c95f26; } .swatch.ground { background: #3566c2; }
.links { position: absolute; inset: 0; width: 100%; height: 100%; overflow: hidden; pointer-events: none; }
.links path { fill: none; stroke: #878787; stroke-width: 3; }
.links .hot { stroke: #ccc; stroke-width: 2; }
.treename { position: absolute; left: 29px; bottom: 26px; font-size: 11px; color: #fff; }

.small { font-size: 8px; background-size: 68px 68px; background-position: 73px 45px;
    background-image: linear-gradient(90deg, #141414 1px, transparent 1px), linear-gradient(#141414 1px, transparent 1px),
        linear-gradient(90deg, transparent 14px, #1b1b1b 14px 15px, transparent 15px 27px, #1b1b1b 27px 28px, transparent 28px 41px, #1b1b1b 41px 42px, transparent 42px 54px, #1b1b1b 54px 55px, transparent 55px),
        linear-gradient(transparent 14px, #1b1b1b 14px 15px, transparent 15px 27px, #1b1b1b 27px 28px, transparent 28px 41px, #1b1b1b 41px 42px, transparent 42px 54px, #1b1b1b 54px 55px, transparent 55px); }
.small .node { width: 109px; gap: 3px; padding: 0 8px 4px; line-height: 12px; border-radius: 3px; }
.small h3 { height: 16px; line-height: 16px; gap: 4px; margin-left: -5px; }
.small h3::before { border-width: 5px 2px 0; }
.small .out { height: 12px; line-height: 12px; padding-right: 5px; margin-bottom: 4px; }
.small .pick { height: 12px; margin-bottom: 3px; }
.small .pick select { padding: 0 0 0 4px; display: block; }
.small .pick::after { width: 3px; height: 3px; right: 3px; margin-top: -3px; }
.small .num { height: 12px; padding: 0 9px; border-radius: 2px; }
.small .line { height: 12px; line-height: 12px; padding-left: 4px; }
.small .swatch { width: 43px; height: 12px; border-radius: 2px; }
.small .sk::before, .small .out::after { width: 6px; height: 6px; left: -11px; margin-top: -3px; }
.small .out::after { left: auto; right: -11px; }
.small .check { height: 12px; }
.small .check input { width: 8px; height: 8px; }
.n-sun { left: 292px; top: 62px; }
.n-day { left: 444px; top: 12px; }
.n-day .out { margin-bottom: 5px; }
.small .n-day .line { height: 11px; }
.small .n-out { left: 593px; top: 71px; width: 95px; padding-bottom: 3px; }
.n-out h3 { background: #7d2532; border-radius: 3px 3px 0 0; }
.small .n-out h3 { height: 14px; margin: 0 -8px 2px; }
.small .n-out .pick { margin-bottom: 2px; }

/* timeline */
.timeline .btn.text { gap: 4px; }
.timeline .menus { margin-left: -10px; }
.timeline .menus button { padding: 0 8px; }
.rec { width: 19px; }
.transport .btn { width: 19px; }
.frame { width: 73px; height: 19px; background: #545454; border-radius: 3px; text-align: center; }
.timeline .bar { padding-right: 19px; }
.range .num { height: 19px; width: 87px; border-radius: 0; box-shadow: none; background: #545454; }
.range .num:last-child { width: 84px; border-radius: 0 3px 3px 0; }
.track { position: relative; flex: 1; padding: 0 30px 0 82px; background: linear-gradient(90deg, rgba(0,0,0,.2) 58px, transparent 58px calc(100% - 60px), rgba(0,0,0,.2) calc(100% - 60px)), linear-gradient(#2b2b2b 23px, #424242 23px); color: #a5a5a5; }
.ticks { display: flex; height: 100%; }
.ticks li { flex: 1; text-align: center; line-height: 25px; background: linear-gradient(#2b2b2b, #2b2b2b) center 23px / 1px 30px no-repeat, linear-gradient(#393939, #393939) left 23px / 1px 30px no-repeat; }
.ticks li:last-child { background: linear-gradient(#000, #000) center 23px / 1px 30px no-repeat, linear-gradient(#393939, #393939) left 23px / 1px 30px no-repeat; }
.scroll { position: absolute; left: 9px; right: 8px; bottom: 2px; height: 8px; border-radius: 4px; background: #666; }
.playhead { position: absolute; left: 46px; top: 2px; width: 26px; height: 19px; line-height: 20px; background: #5680c2; color: #fff; text-align: center; border-radius: 4px; }
.playhead::after { content: ""; position: absolute; left: 12px; top: 19px; width: 2px; height: 29px; background: #5680c2; }

/* outliner */
.outliner { flex: 322; background: #282828; }
.outliner .bar { padding-right: 8px; }
.search { width: 109px; height: 19px; background: #1d1d1d; border-radius: 3px; margin-left: 17px; padding-left: 4px; display: flex; align-items: center; }
.search input { flex: 1; width: 0; }
.rows { flex: 1; padding-top: 2px; background: repeating-linear-gradient(#282828 0 20px, #2c2c2c 20px 40px) 0 1px; color: #c8c8c8; }
.rows li { height: 20px; display: flex; align-items: center; padding-left: 27px; gap: 4px; }
.rows .root { padding-left: 22px; gap: 7px; }
.rows .child { padding-left: 48px; }
.rows .child .tri { margin-right: 3px; }
.rows b { width: 20px; height: 19px; display: grid; place-items: center; border-radius: 3px; }
.chip { background: #555; }
.gap { margin-left: 15px; }
.flags { display: flex; gap: 4px; margin-left: auto; padding-right: 10px; color: #ddd; }
.tri { width: 0; height: 0; border: solid transparent; border-width: 3px 0 3px 6px; border-left-color: #c0c0c0; flex: none; }
.tri.down { border-width: 6px 3px 0; border-top-color: #c0c0c0; margin-right: 8px; }
.tick { appearance: none; width: 11px; height: 11px; background: #ddd; border-radius: 1px; display: grid; place-items: center; }
.tick::after { content: ""; width: 4px; height: 6px; border: solid #222; border-width: 0 2px 2px 0; transform: rotate(40deg); margin-top: -2px; }

/* properties */
.props { flex: 681; background: #383838; }
.crumb { display: flex; align-items: center; gap: 8px; margin: 0 24px 0 6px; }
.crumb + .crumb { margin-left: 0; }
.propbody { flex: 1; min-height: 0; display: flex; }
.ptabs { width: 28px; background: #212121; padding: 10px 0 0 2px; display: flex; flex-direction: column; gap: 2px; }
.ptabs button { height: 26px; background: #2b2b2b; border-radius: 4px 0 0 4px; display: grid; place-items: center; flex: none; }
.ptabs .end { margin-bottom: 8px; }
.ptabs .on { background: #424242; }
.pcontent { flex: 1; min-width: 0; }
.phead { background: #424242; padding: 10px 9px 0 9px; }
.slots { display: flex; gap: 10px; height: 58px; }
.slotlist { flex: 1; height: 38px; background: #383838; border-radius: 4px; padding: 5px 5px 0; }
.slot { height: 18px; line-height: 18px; background: #696d78; color: #fff; padding-left: 25px; }
.grip { display: flex; align-items: center; height: 12px; padding-left: 6px; }
.grip span { margin: 0 auto; }
.slotbtns { width: 18px; }
.slotbtns button { display: grid; place-items: center; width: 18px; height: 19px; background: #575757; font-size: 16px; margin-bottom: 1px; border-radius: 2px; }
.slotbtns .dark { background: #2b2b2b; }
.matrow { display: flex; gap: 10px; margin-top: 7px; }
.matrow .pick { flex: 1; }
.phead h2 { display: flex; align-items: center; height: 22px; margin-top: 10px; font-size: 12px; }
.phead h2 span { margin-left: auto; font-size: 11px; }
.form { padding: 9px 9px 0 9px; display: flex; flex-direction: column; gap: 6px; }
.prop { display: grid; grid-template-columns: minmax(0, 131fr) minmax(0, 138fr); gap: 17px; }
.prop > label { position: relative; text-align: right; line-height: 19px; color: #e0e0e0; }
.prop label .tri { position: absolute; left: 0; top: 6px; }
.first { margin-bottom: 11px; }
.tight { margin-bottom: -3px; }
.field { height: 19px; background: #2b2b2b; border-radius: 3px; display: flex; justify-content: space-between; align-items: center; padding: 0 7px; }
.dot { width: 6px; height: 6px; border: 1px solid #ddd; border-radius: 50%; }
.split { display: flex; gap: 1px; align-items: flex-start; }
.split > input, .split > .black { flex: 1; height: 19px; text-align: center; border-radius: 3px 0 0 3px; }
.split > input { background: #585858; }
.split.gap10 { gap: 10px; }
.sock { width: 19px; height: 19px; flex: none; background: #2b2b2b; border-radius: 0 3px 3px 0; display: grid; place-items: center; }
.gap10 .sock { border-radius: 3px; }
.split .vec { flex: 1; }
.split .num { height: 19px; padding: 0 13px 0 15px; }

/* status bar */
.status { height: 20px; flex: none; margin-top: 2px; background: #2e2e2e; border-bottom: 2px solid #111; display: flex; align-items: center; padding: 2px 30px 0 10px; color: #a5a5a5; }
.hint { display: flex; align-items: center; gap: 8px; }
.h1 { width: 66px; } .h2 { width: 170px; } .h3 { width: 236px; }
.info { margin-left: auto; }
```
